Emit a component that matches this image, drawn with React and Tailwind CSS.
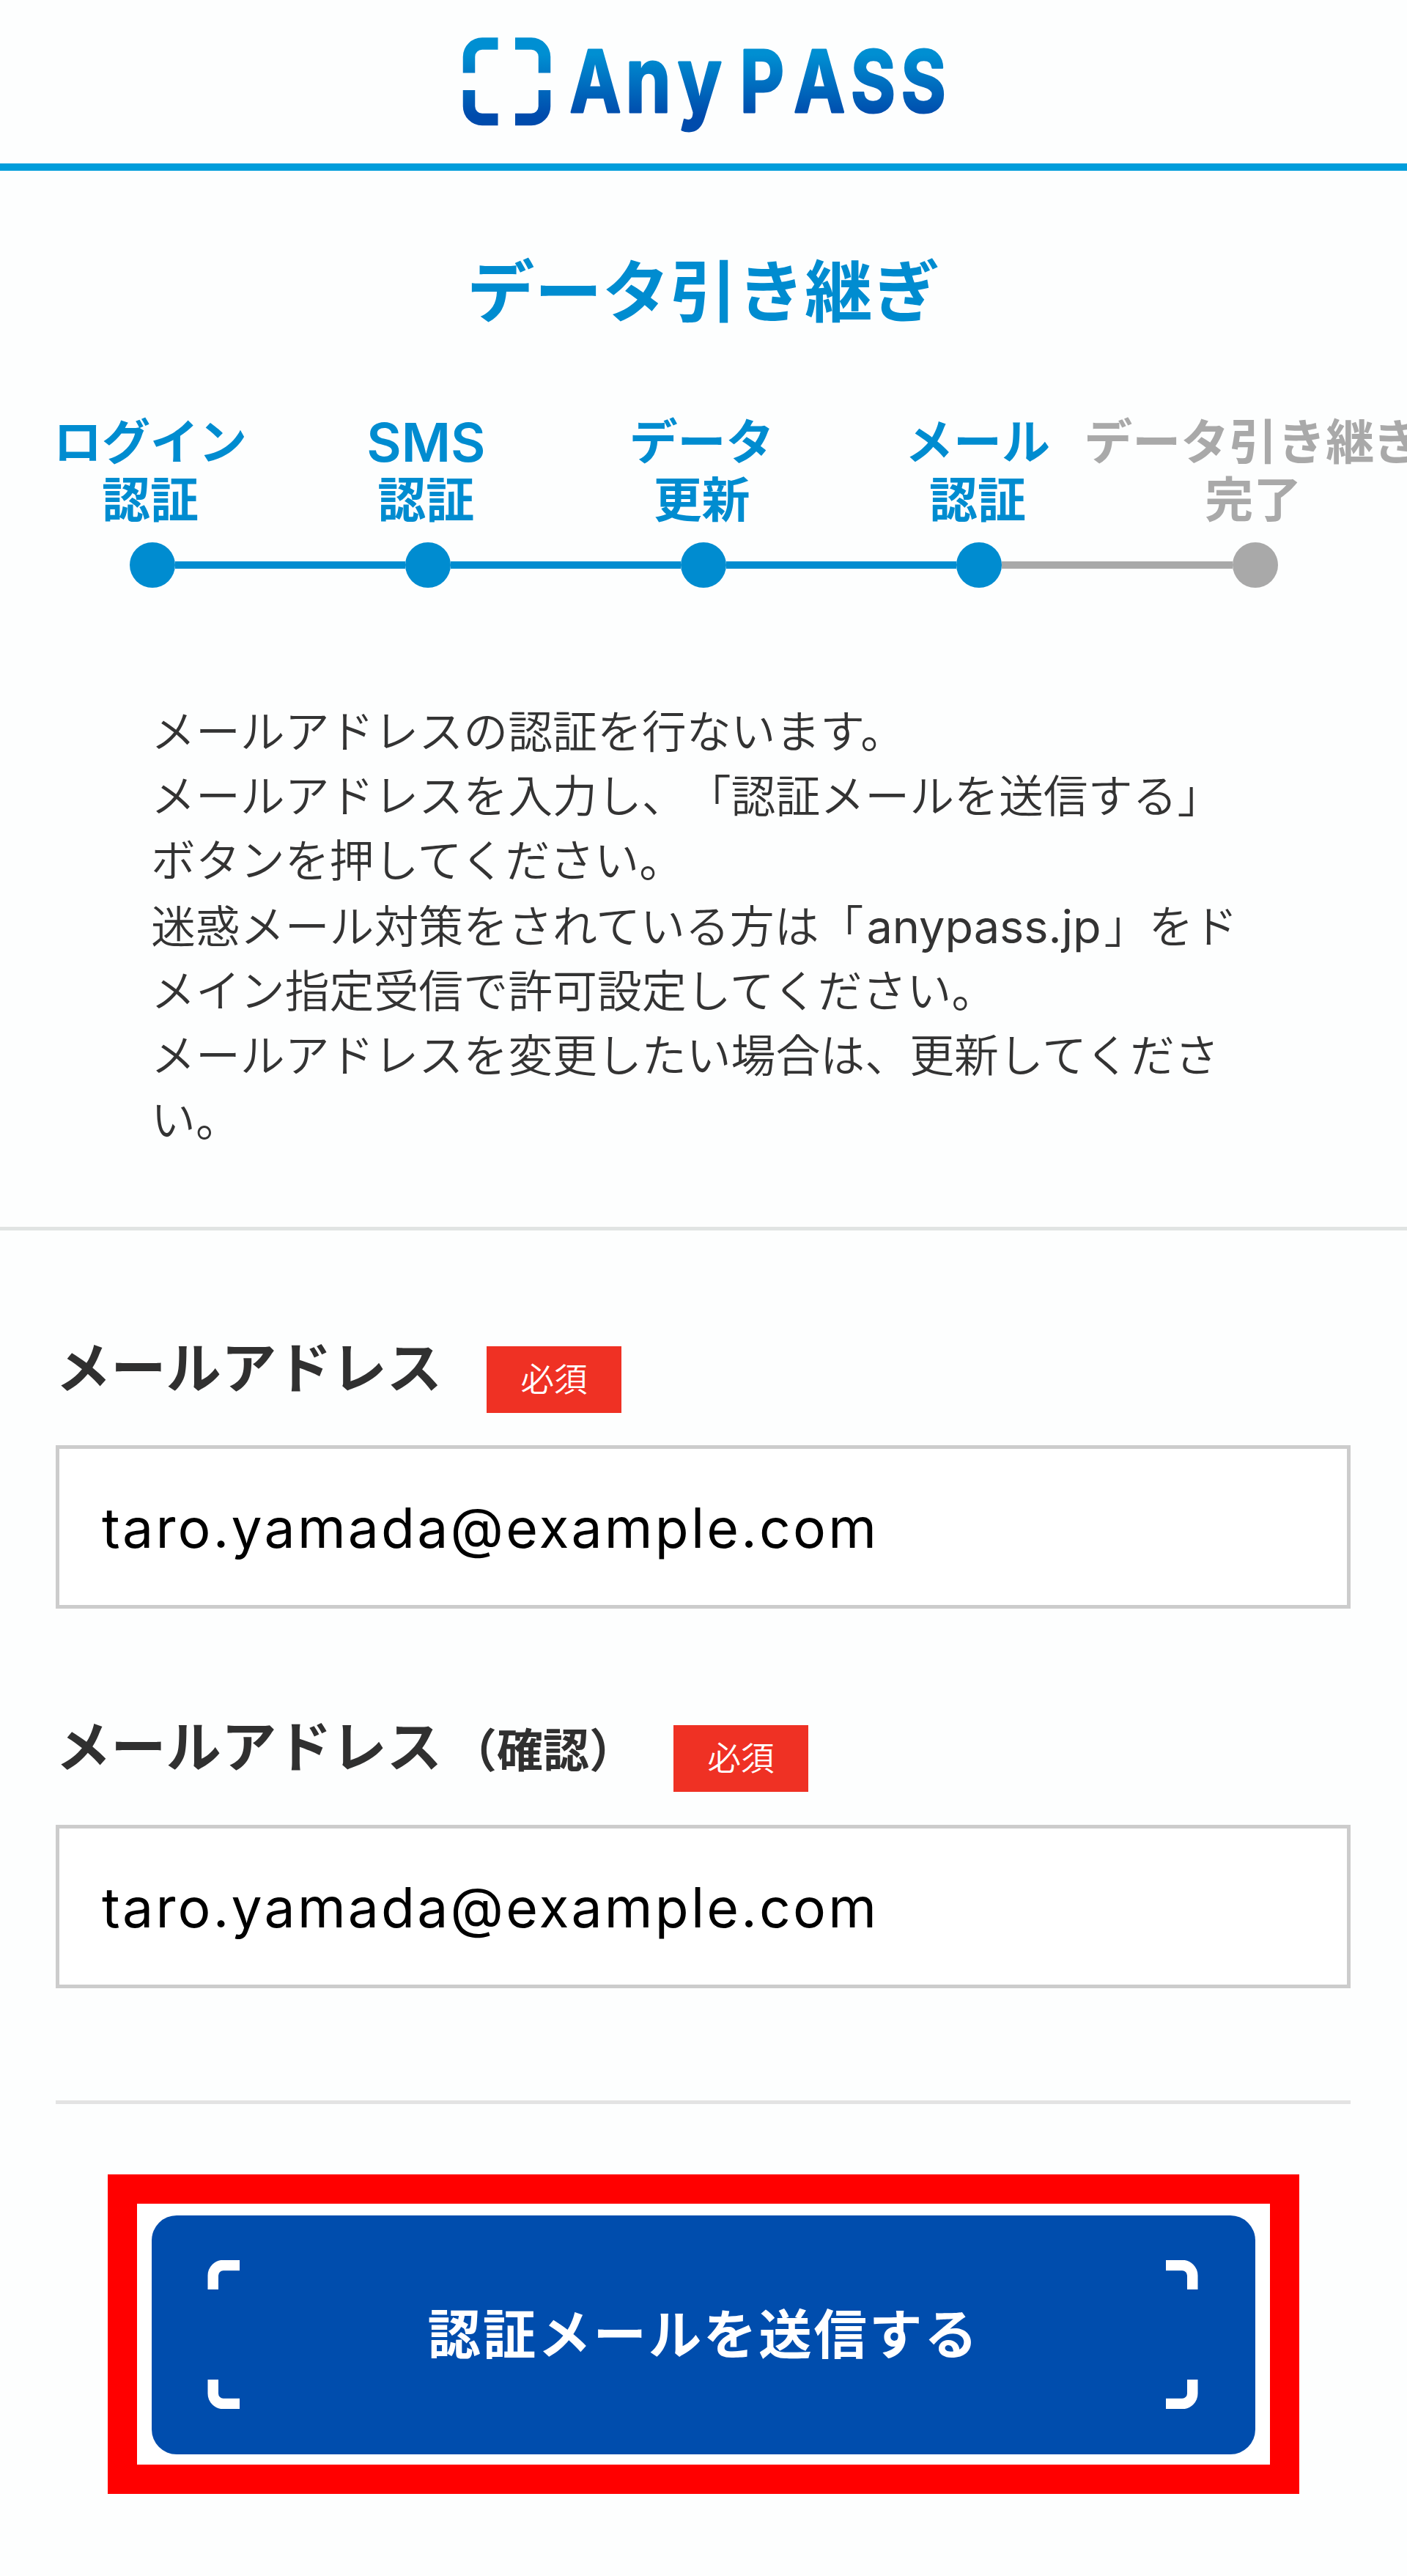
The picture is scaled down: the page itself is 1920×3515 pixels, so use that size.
const steps = [
  { lines: ['ログイン', '認証'], done: true },
  { lines: ['SMS', '認証'], done: true },
  { lines: ['データ', '更新'], done: true },
  { lines: ['メール', '認証'], done: true },
  { lines: ['データ引き継ぎ', '完了'], done: false },
];

function Logo() {
  return (
    <svg width="664" height="136" viewBox="628 50 664 136" role="img" aria-label="AnyPASS" className="overflow-visible">
      <defs>
        <linearGradient id="brand" gradientUnits="userSpaceOnUse" x1="0" y1="74" x2="0" y2="158">
          <stop offset="0" stopColor="#008fd2" />
          <stop offset="1" stopColor="#004bac" />
        </linearGradient>
      </defs>
      <g fill="none" stroke="url(#brand)" strokeWidth="16.5">
        <path d="M640 99.500V77.500a18 18 0 0 1 18-18H679.500" />
        <path d="M703 59.500H725a18 18 0 0 1 18 18V99.500" />
        <path d="M640 123V145a18 18 0 0 0 18 18H679.500" />
        <path d="M703 163H725a18 18 0 0 0 18-18V123" />
      </g>
      <text
        transform="scale(0.8 1)"
        x="972 1067 1156 1262 1354 1451 1537"
        y="153"
        fill="url(#brand)"
        stroke="url(#brand)"
        strokeWidth="3"
        strokeLinejoin="round"
        className="font-['Inter'] text-[117px] font-bold"
      >
        A<tspan className="text-[125px]">ny</tspan>PASS
      </text>
    </svg>
  );
}

function Step({ lines, done, first, nextDone, last }) {
  return (
    <li className="flex w-[376.300px] shrink-0 flex-col items-center">
      <div
        className={
          'mr-[5px] flex flex-col items-center text-[66px] leading-[79px] font-semibold whitespace-nowrap ' +
          (done ? 'text-[#008cd0]' : 'text-[#a9a9a9]')
        }
      >
        {lines.map((l) => (
          <span key={l} className={l === 'SMS' ? 'text-[73px]' : ''}>
            {l}
          </span>
        ))}
      </div>
      <div className="mt-[18px] flex w-full items-center">
        <span className={'h-[10px] flex-1 ' + (first ? '' : done ? 'bg-[#008cd0]' : 'bg-[#a9a9a9]')} />
        <span className={'size-[62px] rounded-full ' + (done ? 'bg-[#008cd0]' : 'bg-[#a9a9a9]')} />
        <span className={'h-[10px] flex-1 ' + (last ? '' : nextDone ? 'bg-[#008cd0]' : 'bg-[#a9a9a9]')} />
      </div>
    </li>
  );
}

function Field({ label, note }) {
  return (
    <div className="h-[518px]">
      <div className="flex h-[112px] items-start">
        <label className="flex h-[90px] items-start text-[75.300px] leading-[90px] font-semibold text-[#303030]">
          <span className={note ? '-mt-[1px]' : ''}>{label}</span>
          {note && <span className="mt-[3px] ml-[12px] text-[63px]">{note}</span>}
        </label>
        <span
          className={
            'flex h-[91px] w-[184px] items-center justify-center bg-[#ef3124] text-[45.500px] font-[350] text-white ' +
            (note ? 'mt-[14px] ml-[52px]' : 'mt-[15px] ml-[61px]')
          }
        >
          必須
        </span>
      </div>
      <input
        readOnly
        value="taro.yamada@example.com"
        className="mt-[38px] block h-[223px] w-full border-[5px] border-[#cccccc] bg-white px-[58px] pt-[2px] text-[75px] tracking-[3.200px] text-black outline-none"
      />
    </div>
  );
}

function Corner({ className }) {
  return (
    <svg width="44" height="40" viewBox="0 0 44 40" className={'absolute ' + className}>
      <path d="M7.750 40V21a14 14 0 0 1 14-14H44" fill="none" stroke="white" strokeWidth="14.500" />
    </svg>
  );
}

export default function App() {
  return (
    <div className="h-[3515px] w-[1920px] overflow-hidden bg-[#fdfefe] font-['Inter','Noto_Sans_CJK_JP',sans-serif] [text-spacing-trim:space-all]">
      <header className="flex h-[233px] justify-center border-b-[10px] border-[#009ddb] pt-[50px]">
        <Logo />
      </header>

      <h1 className="mt-[114px] text-center text-[92.200px] leading-[104px] font-semibold text-[#008cd0]">データ引き継ぎ</h1>

      <ol className="mt-[113px] ml-[19.400px] flex">
        {steps.map((s, i) => (
          <Step
            key={i}
            {...s}
            first={i === 0}
            last={i === steps.length - 1}
            nextDone={steps[i + 1]?.done}
          />
        ))}
      </ol>

      <p className="mt-[153px] ml-[206px] text-[60.900px] leading-[88.200px] font-[350] whitespace-nowrap text-[#333333]">
        メールアドレスの認証を行ないます。
        <br />
        メールアドレスを入力し、「認証メールを送信する」
        <br />
        ボタンを押してください。
        <br />
        迷惑メール対策をされている方は「<span className="mx-[4px] text-[63px] font-normal">anypass.jp</span>」をド
        <br />
        メイン指定受信で許可設定してください。
        <br />
        メールアドレスを変更したい場合は、更新してくださ
        <br />
        い。
      </p>

      <hr className="mt-[101px] border-t-[5px] border-[#e1e4e3]" />

      <form className="mt-[143px] ml-[76px] w-[1767px]">
        <Field label="メールアドレス" />
        <Field label="メールアドレス" note="（確認）" />
        <hr className="mt-[8px] border-t-[5px] border-[#e3e3e3]" />
      </form>

      <div className="mx-auto mt-[96px] h-[436px] w-[1626px] border-[40px] border-[#ff0000] bg-white px-[20px] pt-[16px]">
        <button
          type="button"
          className="relative flex h-[326px] w-full items-center justify-center rounded-[34px] bg-[#004dad] text-[72.500px] font-semibold tracking-[2.800px] text-white"
        >
          認証メールを送信する
          <Corner className="top-[61px] left-[76px]" />
          <Corner className="bottom-[62px] left-[76px] -scale-y-100" />
          <Corner className="top-[61px] right-[78px] -scale-x-100" />
          <Corner className="right-[78px] bottom-[62px] -scale-100" />
        </button>
      </div>
    </div>
  );
}
